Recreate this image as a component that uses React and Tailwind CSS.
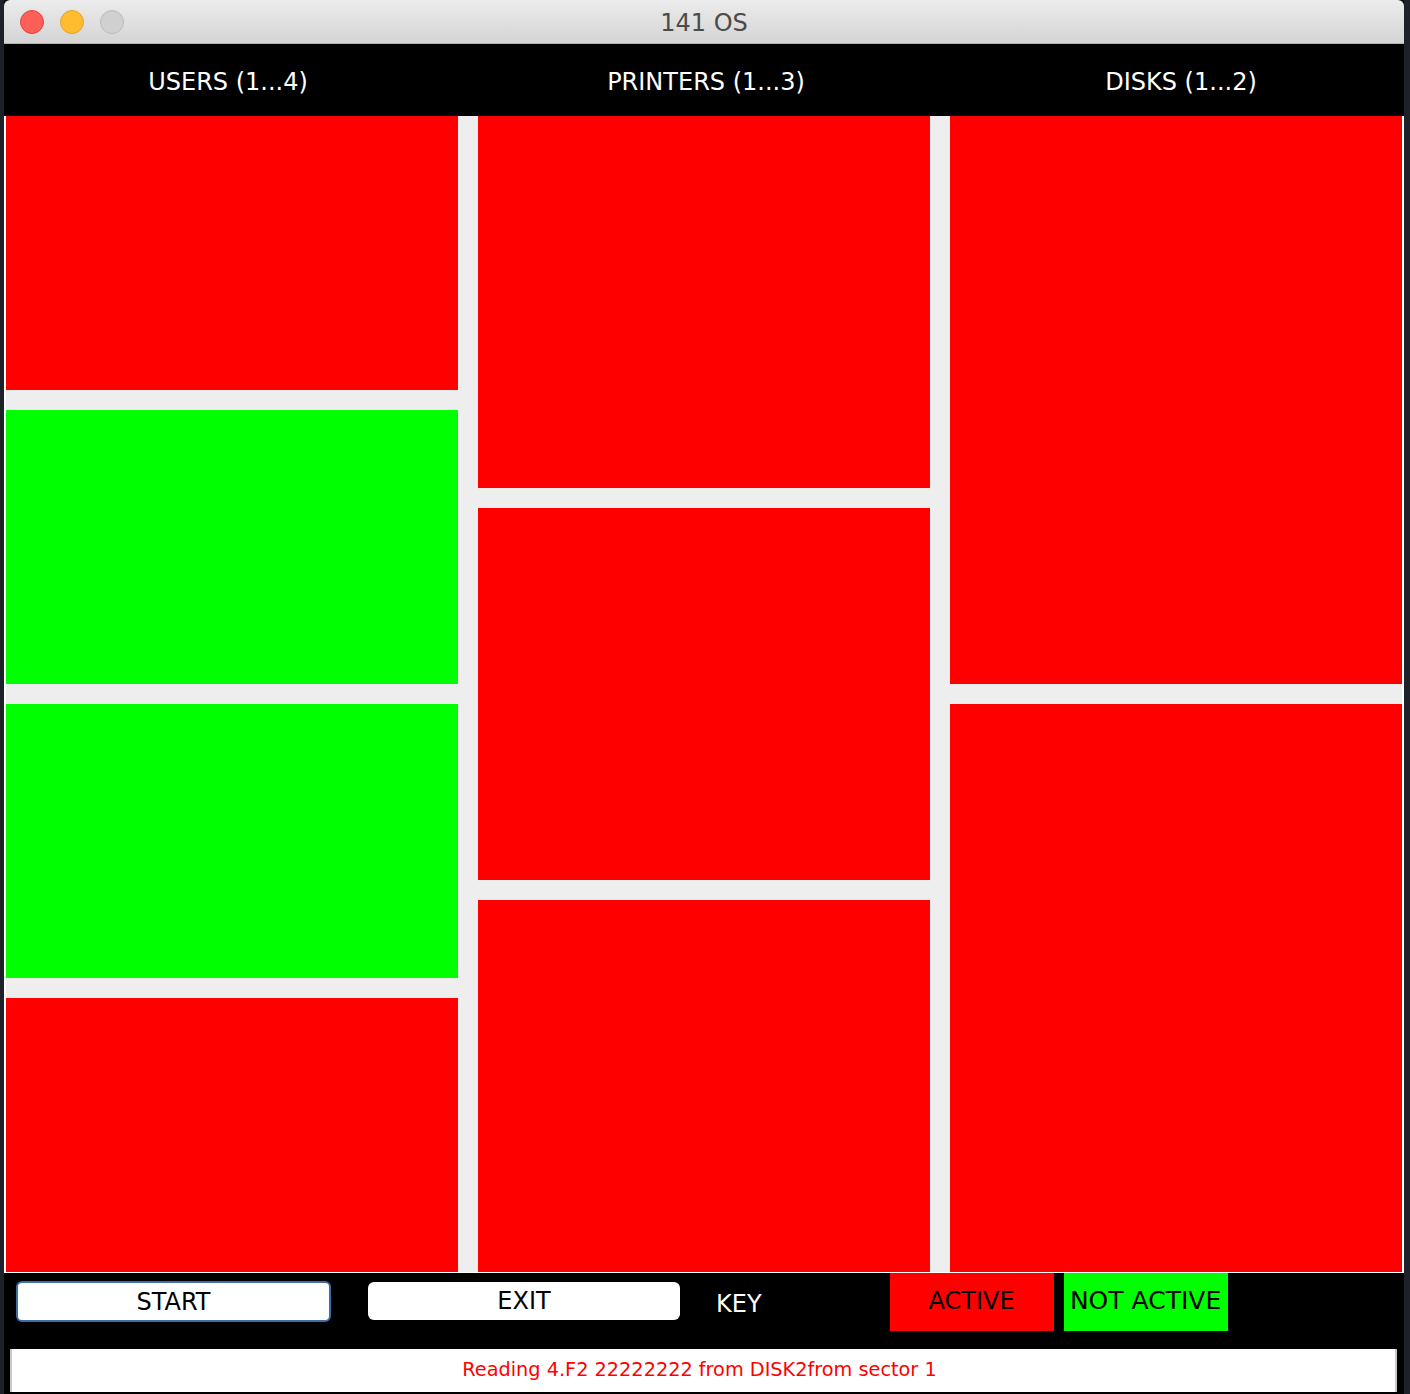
import React from "react";

const font = { fontFamily: '"DejaVu Sans", "Liberation Sans", sans-serif' };

function Block({ color, h }) {
  return <div className={`${color === "g" ? "bg-[#00ff00]" : "bg-[#ff0000]"} ${h}`} />;
}

export default function App() {
  return (
    <div className="w-[1410px] h-[1394px] bg-[#1e2128] flex overflow-hidden" style={font}>
      <div className="w-[4px] shrink-0" />
      <div className="w-[1400px] shrink-0 flex flex-col bg-black">
        {/* title bar */}
        <div className="h-[44px] shrink-0 rounded-t-[6px] bg-gradient-to-b from-[#ececec] to-[#d4d4d4] border-b border-[#b3b3b3] flex items-center">
          <div className="flex items-center gap-[16px] pl-[16px] w-[200px]">
            <div className="w-[24px] h-[24px] rounded-full bg-[#fe5f58] border border-[#e2463f]" />
            <div className="w-[24px] h-[24px] rounded-full bg-[#febc2e] border border-[#e0a42a]" />
            <div className="w-[24px] h-[24px] rounded-full bg-[#d0d0d0] border border-[#bcbcbc]" />
          </div>
          <div className="flex-1 text-center text-[24px] text-[#4b4b4b] -ml-[200px] pt-[3px]">141 OS</div>
        </div>
        {/* header */}
        <div className="h-[72px] shrink-0 flex px-[2px] text-white text-[24px] items-center">
          <div className="w-[452px] text-center pr-[8px] pt-[3px]">USERS (1...4)</div>
          <div className="w-[20px]" />
          <div className="w-[452px] text-center pt-[3px] pl-[4px]">PRINTERS (1...3)</div>
          <div className="w-[20px]" />
          <div className="w-[452px] text-center pl-[10px] pt-[3px]">DISKS (1...2)</div>
        </div>
        {/* panels */}
        <div className="h-[1157px] shrink-0 bg-white px-[2px] pb-[1px]">
          <div className="h-[1156px] bg-[#eeeeee] grid grid-cols-[452px_452px_452px] gap-x-[20px]">
            <div className="flex flex-col gap-[20px]">
              <Block color="r" h="h-[274px]" />
              <Block color="g" h="h-[274px]" />
              <Block color="g" h="h-[274px]" />
              <Block color="r" h="h-[274px]" />
            </div>
            <div className="flex flex-col gap-[20px]">
              <Block color="r" h="h-[372px]" />
              <Block color="r" h="h-[372px]" />
              <Block color="r" h="h-[372px]" />
            </div>
            <div className="flex flex-col gap-[20px]">
              <Block color="r" h="h-[568px]" />
              <Block color="r" h="h-[568px]" />
            </div>
          </div>
        </div>
        {/* bottom controls */}
        <div className="h-[76px] shrink-0 flex items-start text-[24px]">
          <div className="ml-[12px] mt-[8px] w-[315px] h-[41px] rounded-[6px] bg-white border-2 border-[#3f6ea6] flex items-center justify-center text-black">
            START
          </div>
          <div className="ml-[37px] mt-[9px] w-[312px] h-[38px] rounded-[6px] bg-white flex items-center justify-center text-black">
            EXIT
          </div>
          <div className="ml-[36px] mt-[13px] text-white">KEY</div>
          <div className="ml-[128px] w-[164px] h-[58px] bg-[#ff0000] flex items-center justify-center text-black pb-[2px]">
            ACTIVE
          </div>
          <div className="ml-[10px] w-[164px] h-[58px] bg-[#00ff00] flex items-center justify-center text-black whitespace-nowrap text-[25px] pb-[2px]">
            NOT ACTIVE
          </div>
        </div>
        {/* status */}
        <div className="h-[43px] shrink-0 ml-[6px] w-[1387px] bg-white border-l-2 border-r-2 border-[#c8c8c8] flex items-center justify-center text-[19.3px] text-[#ff0000] pr-[8px]">
          Reading 4.F2 22222222 from DISK2from sector 1
        </div>
        <div className="flex-1" />
      </div>
      <div className="w-[6px] shrink-0" />
    </div>
  );
}
